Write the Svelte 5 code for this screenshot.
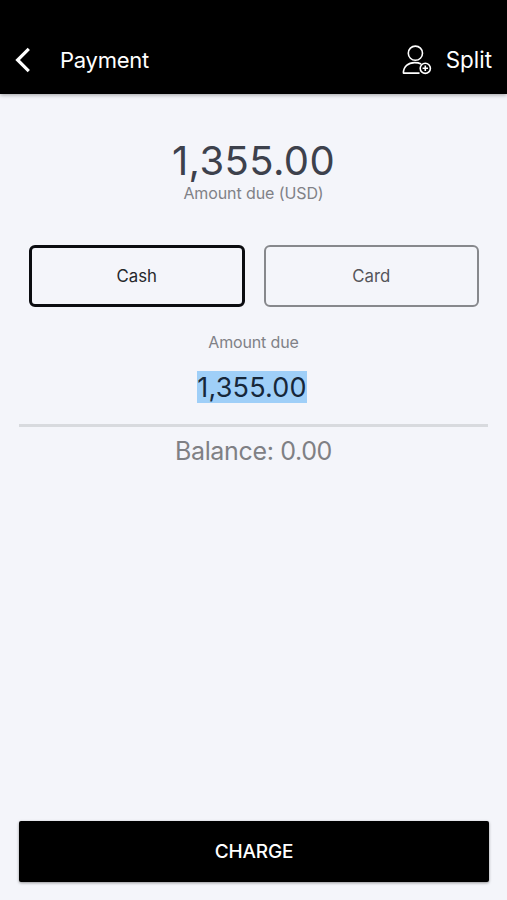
<script lang="ts">
    const methods = ['Cash', 'Card'];

    let selected = $state('Cash');
    let total = '1,355.00';
    let balance = '0.00';
</script>

<div class="screen">
    <header>
        <button class="back" aria-label="Back">
            <svg width="16" height="26" viewBox="0 0 16 26">
                <path d="M13.8 1.8 L2.6 13 L13.8 24.2" fill="none" stroke="#fff" stroke-width="3.2" />
            </svg>
        </button>
        <h1>Payment</h1>
        <button class="split">
            <svg width="30" height="30" viewBox="0 0 30 30" fill="none" stroke="#fff" stroke-width="1.6">
                <circle cx="13.4" cy="8.2" r="7.1" />
                <path d="M17.5 28.1 H1.4 C1.4 21.5 6.2 17.6 12.6 17.6 C15.2 17.6 17.4 18.1 19.2 19" stroke-linejoin="round" />
                <circle cx="23.3" cy="23.3" r="5.1" />
                <path d="M23.3 20.6 V26 M20.6 23.3 H26" />
            </svg>
            <span>Split</span>
        </button>
    </header>

    <main>
        <div class="total">{total}</div>
        <div class="total-label">Amount due (USD)</div>

        <div class="methods">
            {#each methods as method}
                <button class:active={selected === method} onclick={() => (selected = method)}>
                    {method}
                </button>
            {/each}
        </div>

        <div class="due-label">Amount due</div>
        <div class="due"><span>{total}</span></div>
        <div class="balance">Balance: {balance}</div>
    </main>

    <footer>
        <button class="charge">CHARGE</button>
    </footer>
</div>

<style>
    :global(body) {
        background: #f4f5fa;
    }

    .screen {
        display: flex;
        flex-direction: column;
        height: 900px;
        font-family: Inter, "Liberation Sans", sans-serif;
        text-align: center;
    }

    button {
        margin: 0;
        padding: 0;
        border: none;
        background: none;
        font-family: inherit;
        cursor: pointer;
    }

    svg {
        display: block;
    }

    header {
        display: flex;
        align-items: center;
        box-sizing: border-box;
        height: 94px;
        padding: 25px 15px 0 15px;
        background: #000;
        color: #fff;
        box-shadow: 0 1px 4px rgba(0, 0, 0, 0.35);
    }

    h1 {
        flex: 1;
        margin: 0 0 0 29px;
        font-size: 22px;
        font-weight: 400;
        letter-spacing: -0.25px;
        line-height: 28px;
        text-align: left;
    }

    .split {
        display: flex;
        align-items: center;
        gap: 14px;
        color: #fff;
        font-size: 22.4px;
        line-height: 28px;
    }

    main {
        flex: 1;
        padding: 42px 19px 0;
    }

    .total {
        color: #3d414c;
        font-size: 40px;
        letter-spacing: 0.4px;
        line-height: 50px;
    }

    .total-label {
        color: #808187;
        font-size: 16px;
        letter-spacing: -0.1px;
        line-height: 14px;
    }

    .methods {
        display: grid;
        grid-template-columns: 1fr 1fr;
        gap: 19px;
        margin: 45px 9px 0 10px;
    }

    .methods button {
        box-sizing: border-box;
        height: 62px;
        border: 2px solid #87888c;
        border-radius: 6px;
        color: #55565b;
        font-size: 16.8px;
    }

    .methods button.active {
        border: 3px solid #0b0c10;
        color: #26272b;
    }

    .due-label {
        margin-top: 25px;
        color: #808187;
        font-size: 16px;
        letter-spacing: -0.15px;
        line-height: 20px;
    }

    .due {
        display: flex;
        justify-content: center;
        margin-top: 19px;
        padding: 0 3px 21px 0;
        border-bottom: 3px solid #d8dade;
        color: #16273a;
        font-size: 27px;
        letter-spacing: 0.2px;
        line-height: 32px;
    }

    .due span {
        box-sizing: border-box;
        height: 32px;
        padding-top: 1px;
        background: #9fcff8;
    }

    .balance {
        margin-top: 8px;
        color: #7f8084;
        font-size: 25px;
        letter-spacing: -0.35px;
        line-height: 32px;
    }

    footer {
        padding: 0 18px 18px 19px;
    }

    .charge {
        display: block;
        width: 100%;
        height: 61px;
        border-radius: 2px;
        background: #000;
        box-shadow: 0 1px 3px rgba(0, 0, 0, 0.4);
        color: #fff;
        font-size: 19px;
        font-weight: 500;
        letter-spacing: -0.2px;
    }
</style>
